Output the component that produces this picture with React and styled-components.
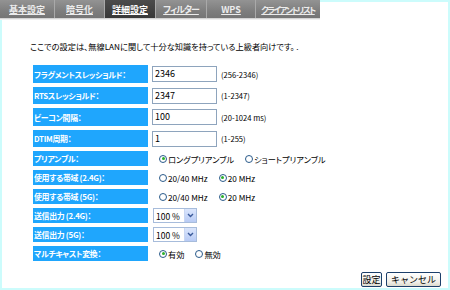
import React from 'react'
import styled, { createGlobalStyle } from 'styled-components'

const GlobalStyle = createGlobalStyle`
    html, body {
        margin: 0;
        padding: 0;
        background: #fff;
    }
    body {
        font-family: "Noto Sans CJK JP", "Noto Sans", sans-serif;
        font-feature-settings: "palt";
        color: #000;
    }
`;

const Page = styled.div`
    width: 450px;
    height: 290px;
    display: flex;
    flex-direction: column;
    box-sizing: border-box;
`;

const TopRow = styled.div`
    display: flex;
    height: 20px;
    flex-shrink: 0;
`;

const TabBar = styled.nav`
    display: flex;
    width: 320px;
    height: 18px;
    background: linear-gradient(#939393, #7e7e7e 60%, #757575);
    border-bottom: 1px solid #d4d4d4;
    box-shadow: 0 1px 0 #efefef;
`;

const Tab = styled.a`
    display: flex;
    align-items: center;
    justify-content: center;
    width: ${p => p.$w}px;
    height: 18px;
    box-sizing: border-box;
    border-right: 1px solid #a9a9a9;
    background: ${p => p.$active ? 'linear-gradient(#4c4c4c, #383838)' : 'transparent'};
    color: ${p => p.$active ? '#fff' : '#ececec'};
    font-size: ${p => p.$fs || 9}px;
    letter-spacing: ${p => p.$ls || 0}px;
    font-weight: bold;
    text-decoration: underline;
    white-space: nowrap;
    &:last-child {
        border-right: none;
    }
`;

const TopFill = styled.div`
    flex: 1;
    border-top: 2px solid #ccfcfc;
    border-right: 2px solid #ccfcfc;
`;

const Body = styled.div`
    flex: 1;
    display: flex;
    flex-direction: column;
    border: 2px solid #ccfcfc;
    border-top: none;
    padding: 21px 7px 0 28px;
`;

const Intro = styled.p`
    margin: 0;
    font-size: 8.2px;
    line-height: 10px;
    height: 10px;
`;

const Table = styled.div`
    display: grid;
    grid-template-columns: 115px 1fr;
    column-gap: 4px;
    row-gap: 4px;
    margin: 14px 0 0 3px;
`;

const Label = styled.div`
    display: flex;
    align-items: center;
    height: ${p => p.$h}px;
    background: #1fa6fd;
    color: #fff;
    font-size: 7.9px;
    letter-spacing: -0.3px;
    font-weight: bold;
    padding-left: 1px;
    white-space: nowrap;
`;

const Value = styled.div`
    display: flex;
    align-items: center;
    height: ${p => p.$h}px;
    font-size: 7.6px;
    white-space: nowrap;
    padding-left: ${p => p.$pad || 0}px;
`;

const TextBox = styled.div`
    width: 65px;
    height: 16px;
    box-sizing: border-box;
    border: 1px solid #8ea4bd;
    background: #fff;
    font-size: 9px;
    line-height: 14px;
    padding-left: 2px;
    margin-right: 4px;
`;

const RadioGroup = styled.div`
    display: flex;
    align-items: center;
    gap: 11px;
    font-size: 8.2px;
`;

const RadioItem = styled.span`
    display: flex;
    align-items: center;
    gap: 1px;
`;

const Circle = styled.span`
    position: relative;
    width: 8px;
    height: 8px;
    box-sizing: border-box;
    border: 1px solid #2a5a8a;
    border-radius: 50%;
    background: #fff;
    &::after {
        content: '';
        display: ${p => p.$on ? 'block' : 'none'};
        position: absolute;
        left: 1.5px;
        top: 1.5px;
        width: 3px;
        height: 3px;
        border-radius: 50%;
        background: #2bb02b;
    }
`;

const SelectBox = styled.div`
    display: flex;
    align-items: center;
    width: 44px;
    height: 15px;
    box-sizing: border-box;
    border: 1px solid #a7bcdb;
    background: #fff;
    margin-left: 1px;
`;

const SelectText = styled.span`
    flex: 1;
    font-size: 8.5px;
    padding-left: 2px;
`;

const SelectArrow = styled.span`
    display: flex;
    align-items: center;
    justify-content: center;
    width: 11px;
    height: 13px;
    background: linear-gradient(#dbe6fc, #b8cbf5);
    border-left: 1px solid #c9d7f3;
`;

const Footer = styled.div`
    display: flex;
    justify-content: flex-end;
    gap: 4px;
    margin-top: 11px;
`;

const Button = styled.button`
    height: 15px;
    width: ${p => p.$w}px;
    padding: 0;
    box-sizing: border-box;
    border: 1px solid #1c3f6a;
    border-radius: 2px;
    background: linear-gradient(#ffffff, #f0efe8 70%, #dcd9cc);
    font-family: "Noto Sans CJK JP", sans-serif;
    font-size: 9px;
    line-height: 12px;
    color: #000;
`;

const tabs = [
    { name: '基本設定', w: 55 },
    { name: '暗号化', w: 50 },
    { name: '詳細設定', w: 51, active: true },
    { name: 'フィルター', w: 51, ls: -1 },
    { name: 'WPS', w: 49 },
    { name: 'クライアントリスト', w: 64, fs: 8.5, ls: -1.6 },
];

function Radio({ on, children }) {
    return (
        <RadioItem>
            <Circle $on={on} />
            {children}
        </RadioItem>
    )
}

function Select({ value }) {
    return (
        <SelectBox>
            <SelectText>{value}</SelectText>
            <SelectArrow>
                <svg width="7" height="5" viewBox="0 0 7 5">
                    <path d="M1 1 L3.5 3.5 L6 1" fill="none" stroke="#3a5a9a" strokeWidth="1.4" />
                </svg>
            </SelectArrow>
        </SelectBox>
    )
}

const rows = [
    { label: 'フラグメントスレッショルド：', h: 18, kind: 'text', value: '2346', hint: '(256-2346)' },
    { label: 'RTSスレッショルド：', h: 17, kind: 'text', value: '2347', hint: '(1-2347)' },
    { label: 'ビーコン間隔：', h: 18, kind: 'text', value: '100', hint: '(20-1024 ms)' },
    { label: 'DTIM周期：', h: 17, kind: 'text', value: '1', hint: '(1-255)' },
    { label: 'プリアンブル：', h: 15, kind: 'radio', options: ['ロングプリアンブル', 'ショートプリアンブル'], on: 0 },
    { label: '使用する帯域 (2.4G)：', h: 15, kind: 'radio', options: ['20/40 MHz', '20 MHz'], on: 1 },
    { label: '使用する帯域 (5G)：', h: 15, kind: 'radio', options: ['20/40 MHz', '20 MHz'], on: 1 },
    { label: '送信出力 (2.4G)：', h: 15, kind: 'select', value: '100 %' },
    { label: '送信出力 (5G)：', h: 15, kind: 'select', value: '100 %' },
    { label: 'マルチキャスト変換：', h: 15, kind: 'radio', options: ['有効', '無効'], on: 0 },
];

function renderValue(row) {
    if (row.kind === 'text') {
        return (
            <Value $h={row.h}>
                <TextBox>{row.value}</TextBox>
                {row.hint}
            </Value>
        )
    }
    if (row.kind === 'select') {
        return (
            <Value $h={row.h}>
                <Select value={row.value} />
            </Value>
        )
    }
    return (
        <Value $h={row.h} $pad={7}>
            <RadioGroup>
                {row.options.map((o, i) => <Radio key={o} on={i === row.on}>{o}</Radio>)}
            </RadioGroup>
        </Value>
    )
}

export default function App() {
    return (
        <Page>
            <GlobalStyle />
            <TopRow>
                <TabBar>
                    {tabs.map(t => (
                        <Tab key={t.name} $w={t.w} $fs={t.fs} $ls={t.ls} $active={t.active}>{t.name}</Tab>
                    ))}
                </TabBar>
                <TopFill />
            </TopRow>
            <Body>
                <Intro>ここでの設定は、無線LANに関して十分な知識を持っている上級者向けです。 .</Intro>
                <Table>
                    {rows.map(r => (
                        <React.Fragment key={r.label}>
                            <Label $h={r.h}>{r.label}</Label>
                            {renderValue(r)}
                        </React.Fragment>
                    ))}
                </Table>
                <Footer>
                    <Button $w={21}>設定</Button>
                    <Button $w={55}>キャンセル</Button>
                </Footer>
            </Body>
        </Page>
    )
}
